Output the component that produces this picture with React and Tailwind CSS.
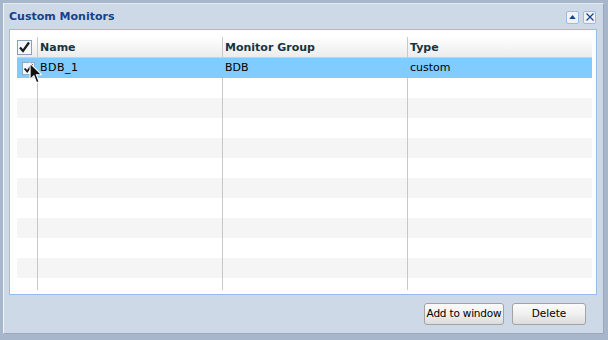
import React from "react";

const rows = Array.from({ length: 12 }, (_, i) => i);

const Check = ({ className }) => (
  <svg viewBox="0 0 15 15" className={className}>
    <rect x="0.5" y="0.5" width="14" height="14" fill="#f4f7fb" stroke="#8aa0b8" />
    <path d="M3 7.5 L6 11 L12 2.5" fill="none" stroke="#1a1a1a" strokeWidth="2.2" />
  </svg>
);

const Cursor = () => (
  <svg viewBox="0 0 12 20" className="absolute left-[25px] top-[58px] w-[13px] h-[22px]">
    <path d="M1 1 L1 16 L4.5 12.5 L7 19 L9.2 18 L6.8 11.6 L11.5 11.6 Z" fill="#111" stroke="#fff" strokeWidth="1" />
  </svg>
);

const App = () => {
  return (
    <div className="w-[608px] h-[340px] bg-[#a7b6ca] pt-[3px] pl-[3px] font-['DejaVu_Sans',sans-serif]">
      <div className="w-[601px] h-[331px] bg-[#cdd9e6] border border-[#99a8bc] border-l-[#eef3f8] border-t-[#e3eaf2] flex flex-col relative">
        {/* Title bar */}
        <div className="h-[25px] flex items-center pl-[5px] pr-[7px]">
          <span className="text-[11px] font-bold text-[#15428b] leading-none">Custom Monitors</span>
          <div className="ml-auto flex gap-[4px] mt-[1px]">
            <div className="w-[13px] h-[13px] bg-[#eef3fa] border border-[#99bbe8] rounded-[2px] flex items-center justify-center">
              <svg viewBox="0 0 8 5" className="w-[7px] h-[4px]">
                <path d="M0 5 L4 0 L8 5 Z" fill="#15428b" />
              </svg>
            </div>
            <div className="w-[13px] h-[13px] bg-[#eef3fa] border border-[#99bbe8] rounded-[2px] flex items-center justify-center">
              <svg viewBox="0 0 8 8" className="w-[8px] h-[8px]">
                <path d="M0.5 0.5 L7.5 7.5 M7.5 0.5 L0.5 7.5" stroke="#15428b" strokeWidth="1.2" />
              </svg>
            </div>
          </div>
        </div>

        {/* Grid panel */}
        <div className="ml-[5px] w-[588px] h-[266px] border border-[#99bbe8] bg-white pt-[7px] pl-[7px] pr-[4px] pb-[4px] flex flex-col">
          {/* Header */}
          <div className="h-[21px] flex bg-gradient-to-b from-white to-[#ececec] border-b border-[#d0d0d0] text-[11px] font-bold text-[#173442]">
            <div className="w-[20px] flex items-center">
              <Check className="w-[15px] h-[15px]" />
            </div>
            <div className="w-[185px] border-l border-[#c8c8c8] pl-[2px] pt-[2px] flex items-center">Name</div>
            <div className="w-[185px] border-l border-[#c8c8c8] pl-[2px] pt-[2px] flex items-center">Monitor Group</div>
            <div className="flex-1 border-l border-[#c8c8c8] pl-[2px] pt-[2px] flex items-center">Type</div>
          </div>
          {/* Body */}
          <div className="flex-1 overflow-hidden text-[11px] text-black">
            <div className="h-[20px] flex bg-[#80ccff]">
              <div className="w-[20px] flex items-center pl-[5px]">
                <Check className="w-[13px] h-[13px]" />
              </div>
              <div className="w-[185px] pl-[3px] flex items-center tracking-[0.5px]">BDB_1</div>
              <div className="w-[185px] pl-[3px] flex items-center">BDB</div>
              <div className="flex-1 pl-[3px] flex items-center">custom</div>
            </div>
            {rows.slice(1).map((i) => (
              <div key={i} className={`h-[20px] flex ${i % 2 === 0 ? "bg-[#f5f5f5]" : "bg-white"}`}>
                <div className="w-[20px]" />
                <div className="w-[185px] border-l border-[#c8c8c8]" />
                <div className="w-[185px] border-l border-[#c8c8c8]" />
                <div className="flex-1 border-l border-[#c8c8c8]" />
              </div>
            ))}
          </div>
        </div>

        {/* Buttons */}
        <div className="flex justify-end gap-[8px] pr-[17px] mt-[8px]">
          <button className="w-[80px] h-[22px] px-0 whitespace-nowrap rounded-[3px] border border-[#a3a3a3] bg-gradient-to-b from-[#fbfbfb] via-[#f0f0f0] to-[#dcdcdc] text-[10.5px] tracking-[-0.2px] text-black">
            Add to window
          </button>
          <button className="w-[74px] h-[22px] px-0 whitespace-nowrap rounded-[3px] border border-[#a3a3a3] bg-gradient-to-b from-[#fbfbfb] via-[#f0f0f0] to-[#dcdcdc] text-[10.5px] text-black">
            Delete
          </button>
        </div>
        <Cursor />
      </div>
    </div>
  );
};

export default App;
